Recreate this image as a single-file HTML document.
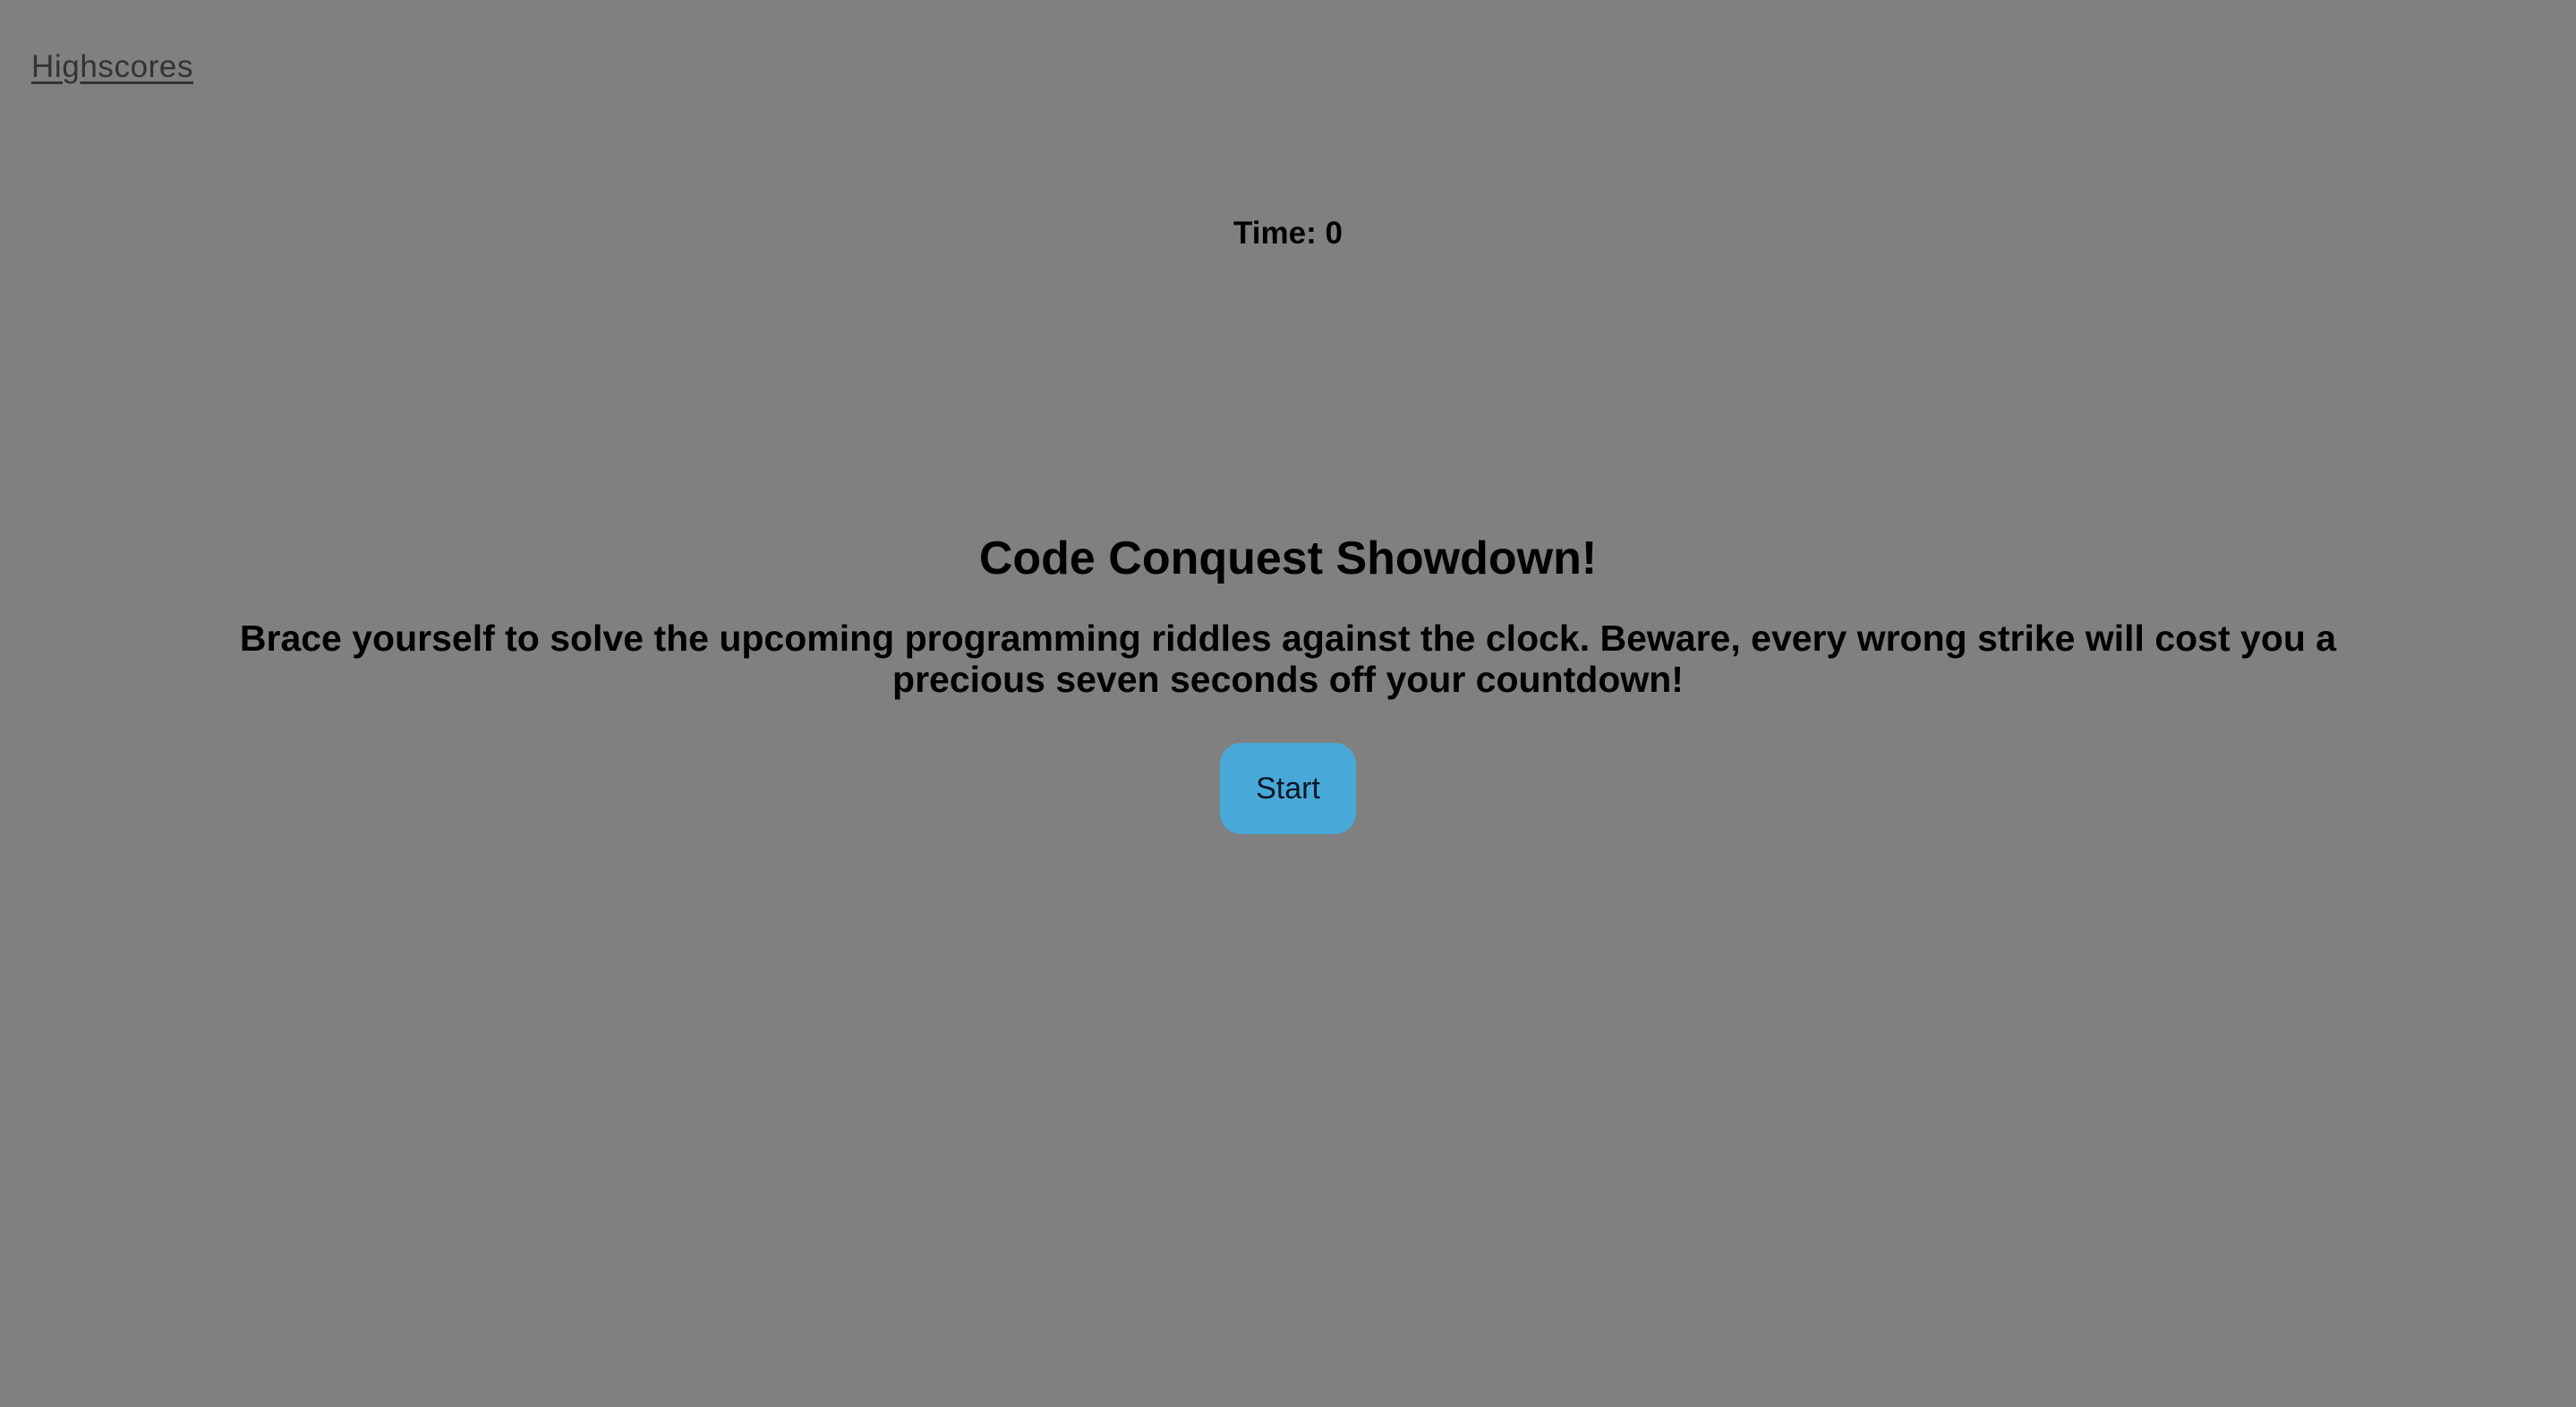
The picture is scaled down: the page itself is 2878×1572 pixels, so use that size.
<!DOCTYPE html>
<html><head><meta charset="utf-8"><style>
html,body{margin:0;padding:0;width:2878px;height:1572px;background:#808080;overflow:hidden;font-family:"Liberation Sans",sans-serif;}
.hs{position:absolute;left:35px;top:55px;font-size:35px;letter-spacing:0.6px;color:#333;text-decoration:underline;text-decoration-thickness:3px;text-underline-offset:5px;}
.time{position:absolute;left:0;width:2878px;top:240px;text-align:center;font-size:35px;font-weight:bold;color:#000;line-height:42px;}
h1{position:absolute;left:0;width:2878px;top:594px;margin:0;text-align:center;font-size:52px;font-weight:bold;color:#000;line-height:60px;}
p{position:absolute;left:0;width:2878px;top:690px;margin:0;text-align:center;font-size:41px;font-weight:bold;color:#000;line-height:46px;}
.btn{position:absolute;left:1363px;top:830px;width:152px;height:102px;background:#48a9d9;border-radius:24px;color:#0a1626;font-size:34px;line-height:102px;text-align:center;}
</style></head><body>
<div class="hs">Highscores</div>
<div class="time">Time: 0</div>
<h1>Code Conquest Showdown!</h1>
<p>Brace yourself to solve the upcoming programming riddles against the clock. Beware, every wrong strike will cost you a<br>precious seven seconds off your countdown!</p>
<div class="btn">Start</div>
</body></html>
